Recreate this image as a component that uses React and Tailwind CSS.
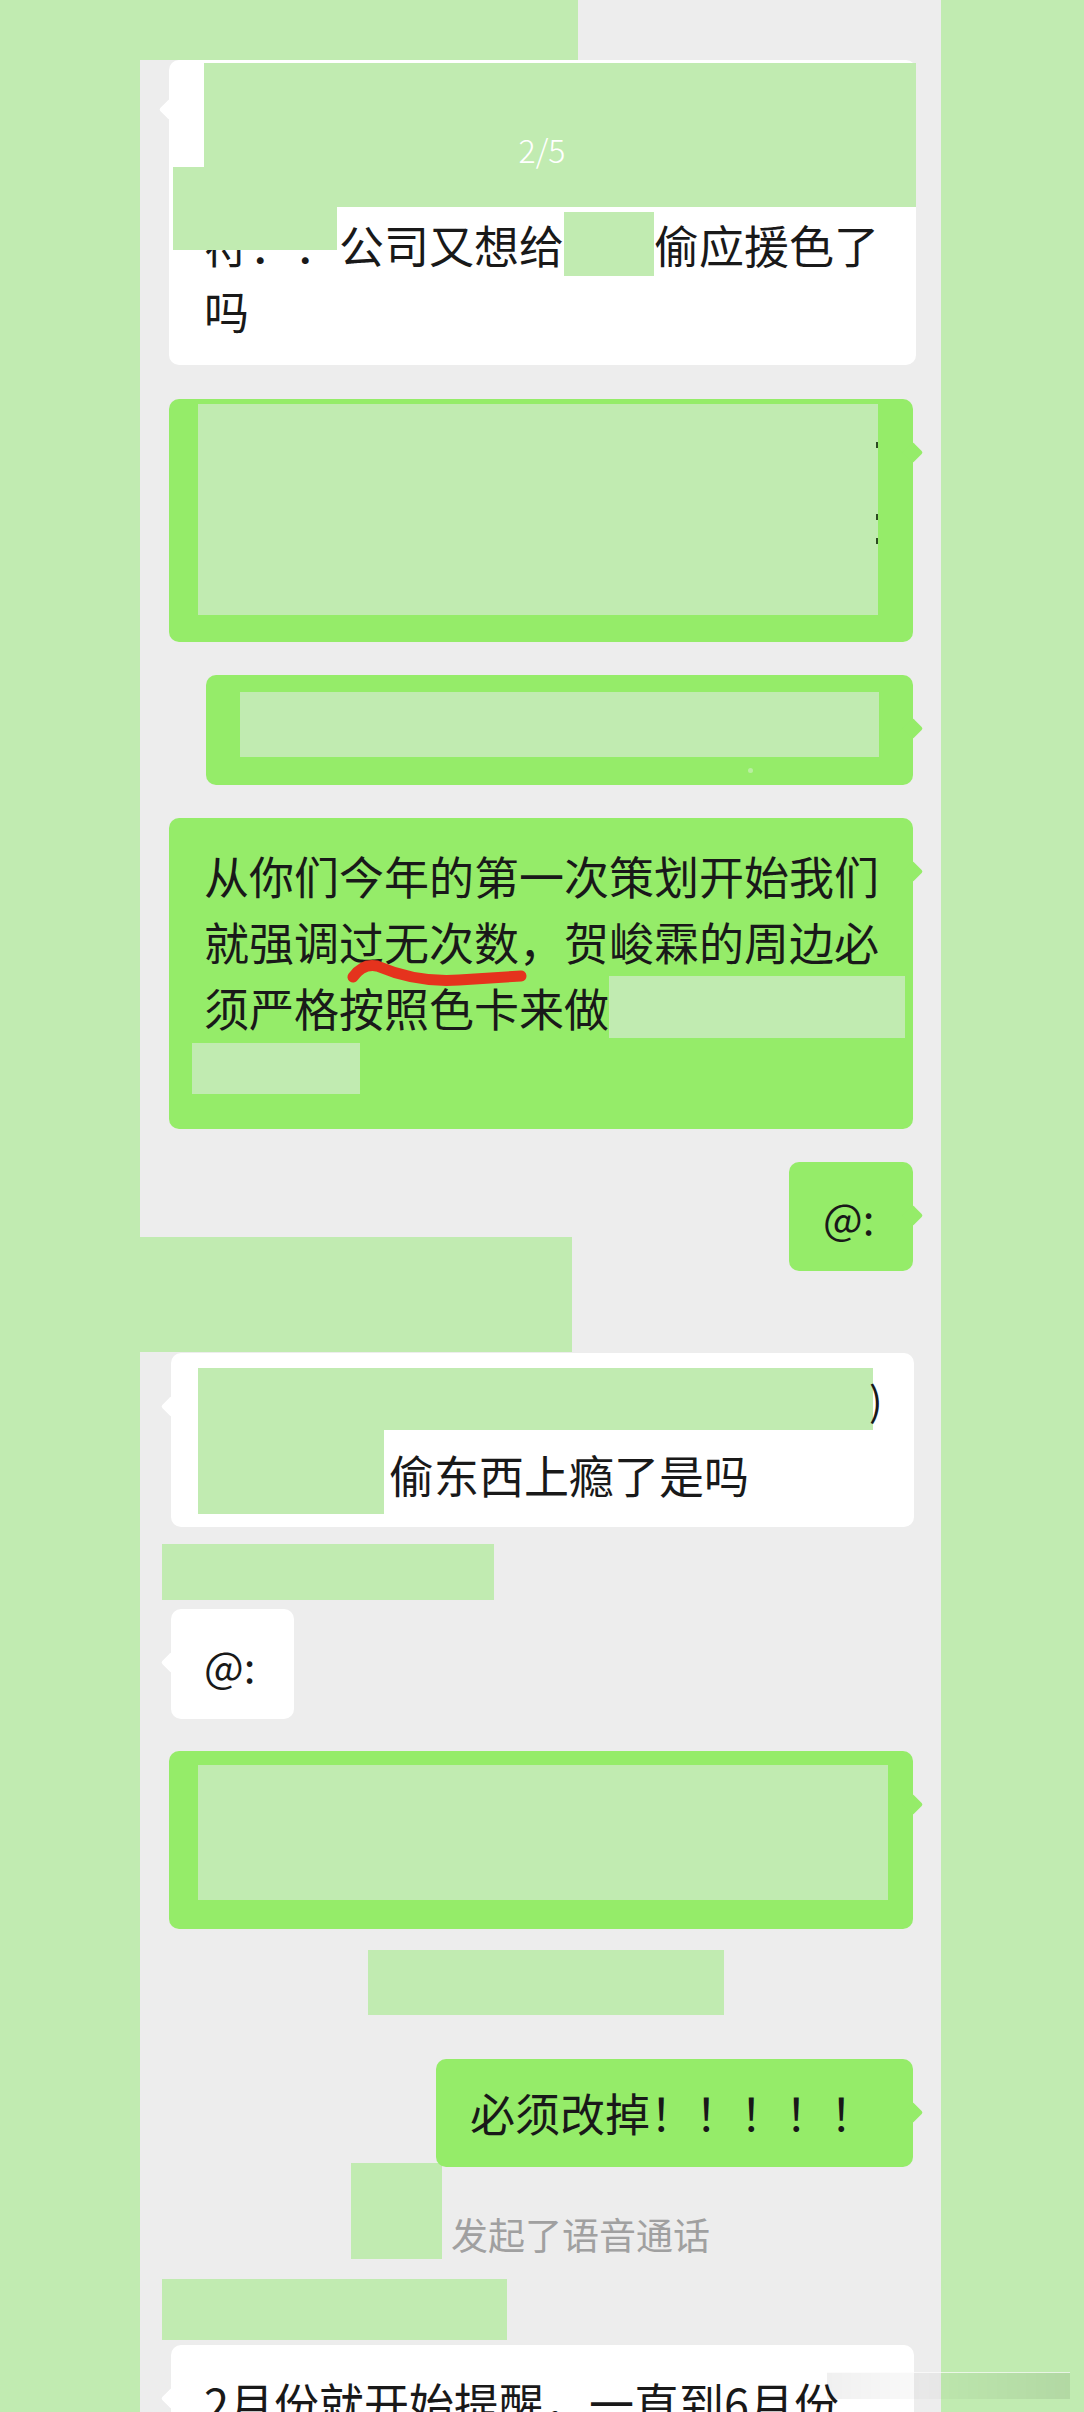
import React from 'react';

// Redacted WeChat chat screenshot: pale green blocks cover names, avatars and times.

const Tail = ({ side, tone, top = 'top-[46px]' }) => (
  <span
    className={
      side === 'right'
        ? `absolute ${top} -right-[7px] w-[15px] h-[15px] rotate-45 rounded-[2px] ${tone}`
        : `absolute ${top} -left-[7px] w-[15px] h-[15px] rotate-45 rounded-[2px] ${tone}`
    }
  />
);

const Redact = ({ className = '', children }) => (
  <div className={`bg-[#c1ebb1] shrink-0 ${className}`}>{children}</div>
);

export default function App() {
  return (
    <div className="relative w-[1084px] h-[2412px] overflow-hidden flex bg-[#c1ebb1] text-[#191919] [text-spacing-trim:space-all] font-['Noto_Sans_CJK_SC','Noto_Sans',sans-serif]">
      {/* left strip */}
      <div className="w-[140px] shrink-0" />

      {/* chat column */}
      <div className="w-[801px] shrink-0 bg-[#ededed] flex flex-col">
        <Redact className="w-[438px] h-[60px]" />

        {/* 1: white, quoted line */}
        <div className="relative ml-[29px] w-[747px] shrink-0 rounded-[10px] bg-white pb-[21px] text-[45px] leading-[66px] whitespace-nowrap">
          <Tail side="left" tone="bg-white" top="top-[42px]" />
          <div className="pl-[35px] pt-[3px] h-[152px]">
            <Redact className="w-[712px] h-[144px] flex justify-center pt-[66px] pr-[36px] text-[32px] leading-[40px] font-light text-white">
              2/5
            </Redact>
          </div>
          <div className="pl-[35px]">
            <div>
              符：：公司又想给
              <span className="inline-block align-top w-[90px] h-[64px] bg-[#c1ebb1]" />
              偷应援色了
            </div>
            <div>吗</div>
          </div>
          <Redact className="absolute left-[4px] top-[107px] w-[164px] h-[83px]" />
        </div>

        {/* 2: green, redacted */}
        <div className="relative mt-[34px] ml-[29px] w-[744px] h-[243px] shrink-0 rounded-[10px] bg-[#95ec69] pl-[29px] pt-[5px]">
          <Tail side="right" tone="bg-[#95ec69]" />
          <Redact className="w-[680px] h-[211px] flex flex-col items-end gap-[66px] pt-[38px]">
            <span className="w-[2px] h-[6px] bg-[#2d4a22]" />
            <span className="w-[2px] h-[30px] bg-[linear-gradient(#2d4a22_0_20%,transparent_20%_80%,#2d4a22_80%)]" />
          </Redact>
        </div>

        {/* 3: green, redacted */}
        <div className="relative mt-[33px] ml-[66px] w-[707px] h-[110px] shrink-0 rounded-[10px] bg-[#95ec69] pl-[34px] pt-[17px]">
          <Tail side="right" tone="bg-[#95ec69]" />
          <Redact className="w-[639px] h-[65px]" />
          <span className="block ml-[508px] mt-[11px] w-[5px] h-[5px] rounded-full bg-[#b9eea0]" />
        </div>

        {/* 4: green, long text with red underline */}
        <div className="relative mt-[33px] ml-[29px] w-[744px] shrink-0 rounded-[10px] bg-[#95ec69] pt-[25px] pb-[22px] pl-[35px] text-[45px] leading-[66px] whitespace-nowrap">
          <Tail side="right" tone="bg-[#95ec69]" />
          <div>从你们今年的第一次策划开始我们</div>
          <div>就强调过无次数，贺峻霖的周边必</div>
          <div>
            须严格按照色卡来做
            <span className="inline-block align-top mt-[1px] w-[296px] h-[62px] bg-[#c1ebb1]" />
          </div>
          <div className="h-[66px] pt-[2px]">
            <Redact className="-ml-[12px] w-[168px] h-[51px]" />
          </div>
          <svg className="absolute left-[178px] top-[138px]" width="184" height="32" viewBox="0 0 184 32">
            <path d="M6 21 Q 16 7 30 10 Q 70 27 112 24 L 174 20" fill="none" stroke="#e5331d" strokeWidth="11" strokeLinecap="round" strokeLinejoin="round" />
          </svg>
        </div>

        {/* 5: green "@:" */}
        <div className="relative mt-[33px] ml-[649px] w-[124px] h-[109px] shrink-0 rounded-[10px] bg-[#95ec69] flex items-center pl-[34px] text-[42px]">
          <Tail side="right" tone="bg-[#95ec69]" />
          @:
        </div>

        <Redact className="-mt-[34px] w-[432px] h-[115px]" />

        {/* 6: white */}
        <div className="relative mt-[1px] ml-[31px] w-[743px] h-[174px] shrink-0 rounded-[10px] bg-white pl-[27px] pt-[15px] text-[45px] leading-[70px] whitespace-nowrap">
          <Tail side="left" tone="bg-white" />
          <div className="flex items-center h-[62px]">
            <Redact className="w-[675px] h-[62px]" />
            <span className="-ml-[4px] text-[40px]">)</span>
          </div>
          <div className="flex items-start">
            <Redact className="w-[186px] h-[84px]" />
            <span className="ml-[5px] mt-[10px]">偷东西上瘾了是吗</span>
          </div>
        </div>

        <Redact className="mt-[17px] ml-[22px] w-[332px] h-[56px]" />

        {/* 7: white "@:" */}
        <div className="relative mt-[9px] ml-[31px] w-[123px] h-[110px] shrink-0 rounded-[10px] bg-white flex items-center pl-[33px] text-[42px]">
          <Tail side="left" tone="bg-white" />
          @:
        </div>

        {/* 8: green, redacted */}
        <div className="relative mt-[32px] ml-[29px] w-[744px] h-[178px] shrink-0 rounded-[10px] bg-[#95ec69] pl-[29px] pt-[14px]">
          <Tail side="right" tone="bg-[#95ec69]" />
          <Redact className="w-[690px] h-[135px]" />
        </div>

        <Redact className="mt-[21px] ml-[228px] w-[356px] h-[65px]" />

        {/* 9: green short */}
        <div className="relative mt-[44px] ml-[296px] w-[477px] h-[108px] shrink-0 rounded-[10px] bg-[#95ec69] flex items-center pl-[34px] text-[45px] whitespace-nowrap">
          <Tail side="right" tone="bg-[#95ec69]" />
          必须改掉！！！！！
        </div>

        {/* system line */}
        <div className="-mt-[4px] ml-[211px] flex items-end shrink-0">
          <Redact className="w-[91px] h-[96px]" />
          <span className="ml-[9px] text-[37px] leading-[50px] text-[#a0a0a0]">发起了语音通话</span>
        </div>

        <Redact className="mt-[20px] ml-[22px] w-[345px] h-[61px]" />

        {/* 10: white, cut off by the screenshot edge */}
        <div className="relative mt-[5px] ml-[31px] w-[743px] h-[200px] shrink-0 rounded-[10px] bg-white pt-[25px] pl-[33px] text-[45px] leading-[66px] whitespace-nowrap">
          <Tail side="left" tone="bg-white" />
          2月份就开始提醒，一直到6月份
        </div>
      </div>

      {/* right strip */}
      <div className="flex-1" />

      {/* motion smear from the screenshot, lying over the last bubble and the strip */}
      <div className="absolute left-[827px] top-[2372px] w-[243px] h-[27px] bg-[linear-gradient(90deg,rgba(0,0,0,0.06),rgba(0,0,0,0.02)_40%,rgba(0,0,0,0.08))] border-t border-white/70" />
    </div>
  );
}
